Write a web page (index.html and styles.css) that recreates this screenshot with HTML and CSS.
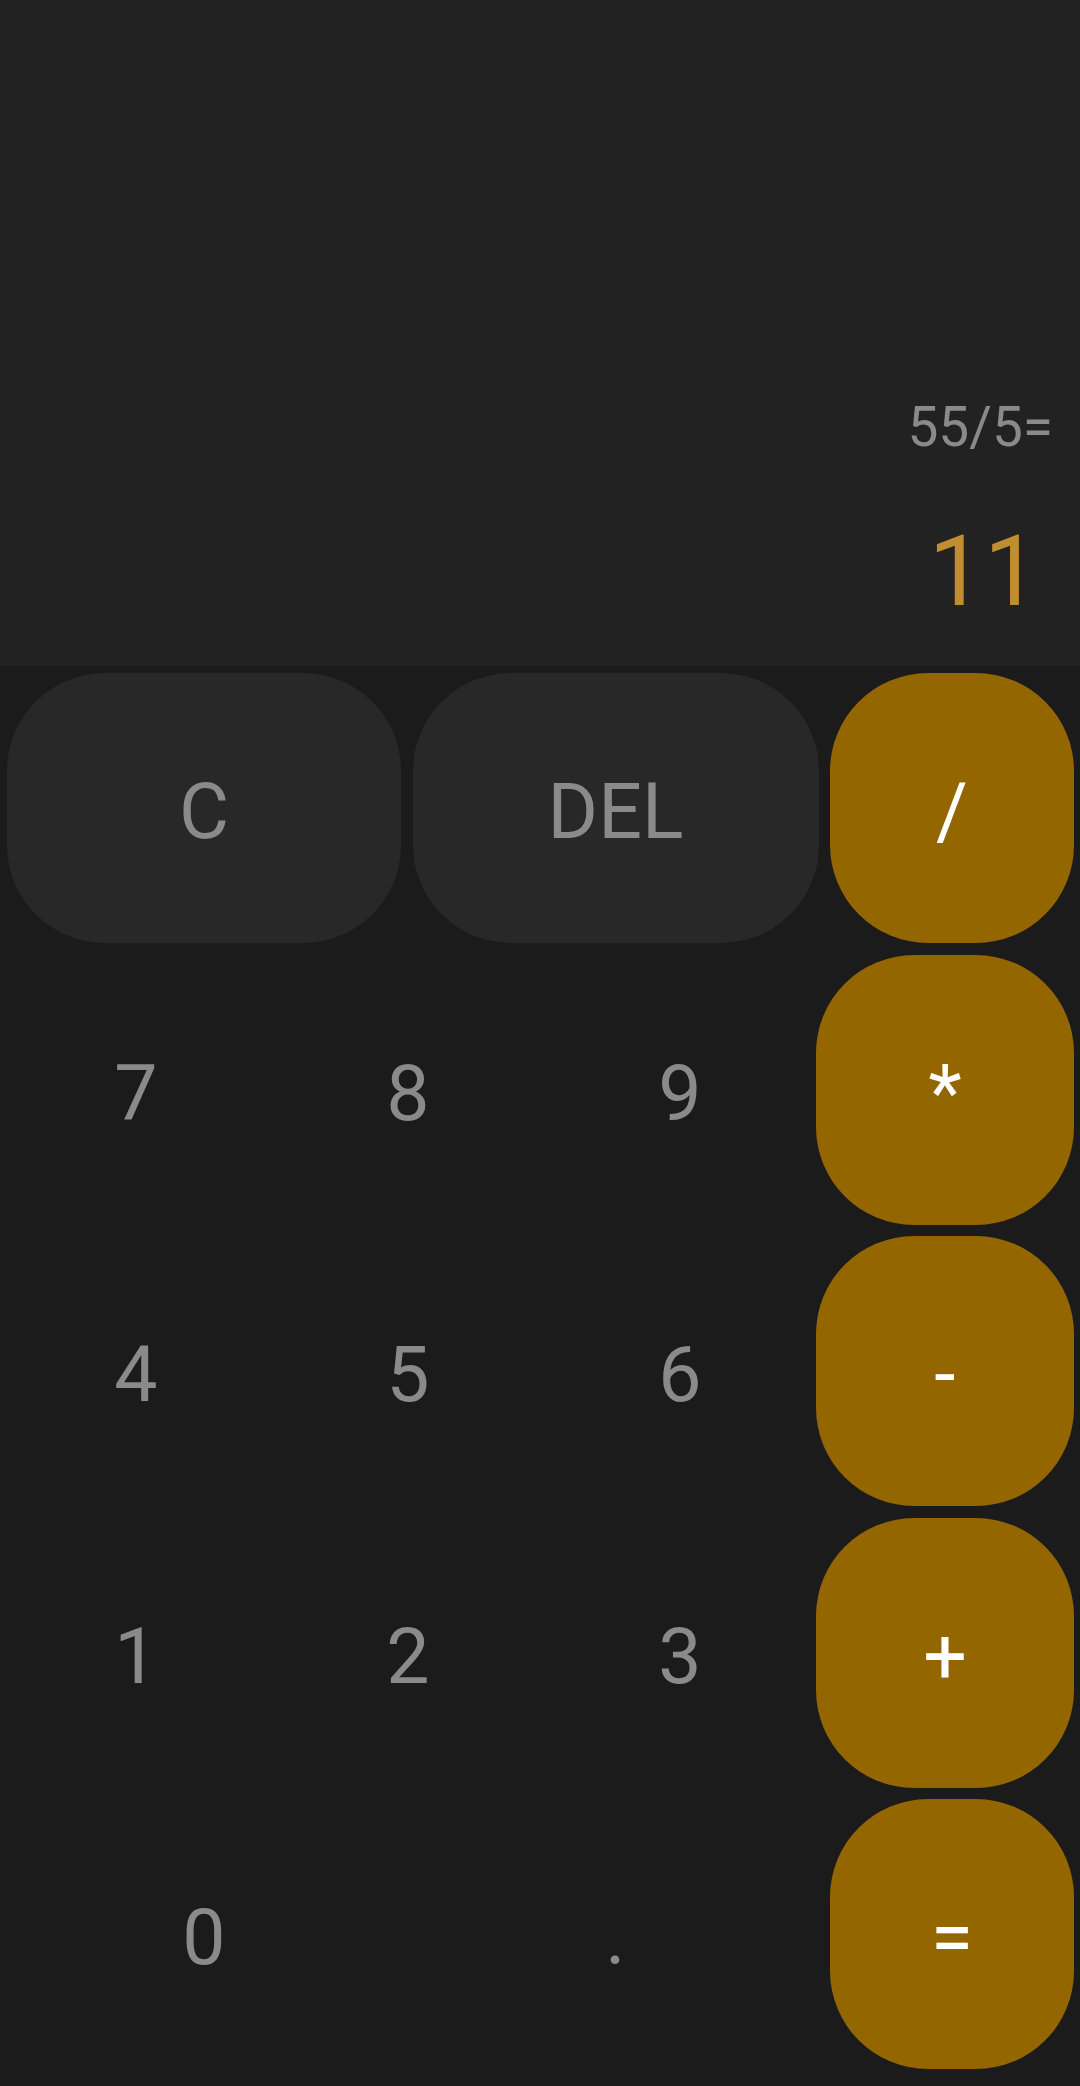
FILE: index.html
```html
<!DOCTYPE html>
<html lang="en">
<head>
<meta charset="utf-8">
<title>Calculator</title>
<link rel="stylesheet" href="styles.css">
</head>
<body>
<div class="app">
  <div class="display">
    <div class="expr">55/5=</div>
    <div class="result">11</div>
  </div>
  <div class="keypad">
    <div class="row row-wide">
      <div class="key key-fn">C</div>
      <div class="key key-fn">DEL</div>
      <div class="key key-op">/</div>
    </div>
    <div class="row row-num">
      <div class="key">7</div>
      <div class="key">8</div>
      <div class="key">9</div>
      <div class="key key-op">*</div>
    </div>
    <div class="row row-num">
      <div class="key">4</div>
      <div class="key">5</div>
      <div class="key">6</div>
      <div class="key key-op">-</div>
    </div>
    <div class="row row-num">
      <div class="key">1</div>
      <div class="key">2</div>
      <div class="key">3</div>
      <div class="key key-op">+</div>
    </div>
    <div class="row row-wide">
      <div class="key">0</div>
      <div class="key">.</div>
      <div class="key key-op">=</div>
    </div>
  </div>
</div>
</body>
</html>
```
FILE: styles.css
```css
* { box-sizing: border-box; }
html, body {
  margin: 0;
  padding: 0;
  background: #1b1b1b;
  font-family: Roboto, "Liberation Sans", sans-serif;
}
.app {
  width: 1080px;
  min-height: 2086px;
  display: flex;
  flex-direction: column;
}
.display {
  height: 666px;
  background: #222222;
  display: flex;
  flex-direction: column;
  align-items: flex-end;
  justify-content: flex-end;
  padding: 0 0 45px 0;
}
.expr {
  font-size: 55px;
  line-height: 55px;
  color: #8a8a8a;
  padding-right: 27px;
}
.result {
  font-size: 98px;
  line-height: 98px;
  color: #c08d31;
  margin-top: 68px;
  padding-right: 41px;
}
.keypad {
  flex: 1;
  display: flex;
  flex-direction: column;
  gap: 11.5px;
  padding-top: 7px;
  background: #1b1b1b;
}
.row {
  display: grid;
  height: 270px;
}
.row-wide {
  grid-template-columns: 394px 406px 244px;
  column-gap: 11.5px;
  padding-left: 7px;
}
.row-num {
  grid-template-columns: 272px 272px 272px 258px;
}
.key {
  display: flex;
  align-items: center;
  justify-content: center;
  padding-top: 8px;
  font-size: 77px;
  color: #8a8a8a;
  border-radius: 98px;
}
.key-fn {
  background: #282828;
}
.key-op {
  background: #946600;
  color: #ffffff;
}
```
